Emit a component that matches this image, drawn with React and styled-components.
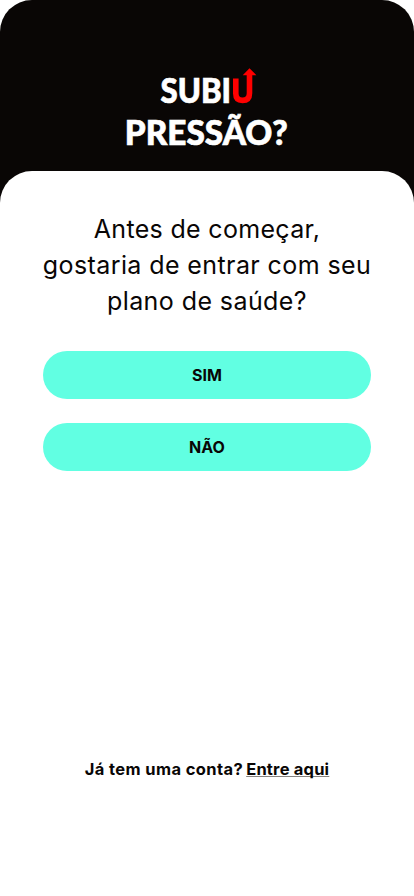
import React from "react";
import styled, { createGlobalStyle } from "styled-components";

const GlobalStyle = createGlobalStyle`
  * { box-sizing: border-box; }
  body { margin: 0; background: #fff; }
`;

const Screen = styled.div`
  width: 100%;
  height: 896px;
  display: flex;
  flex-direction: column;
  overflow: hidden;
  border-radius: 32px 32px 0 0;
  background: #090605;
  font-family: Inter, sans-serif;
  color: #090605;
`;

const Header = styled.header`
  flex: 0 0 171px;
  display: flex;
  justify-content: center;
  padding-top: 64px;
`;

const LogoSvg = styled.svg`
  display: block;
  width: 170px;
  height: 90px;
  font-family: Lato, sans-serif;
  font-weight: 900;
  font-size: 33.5px;
`;

const LogoText = styled.text`
  fill: #fff;
  stroke: #fff;
  stroke-width: 0.7px;
`;

const Sheet = styled.main`
  flex: 1;
  display: flex;
  flex-direction: column;
  padding: 40px 43px 0;
  border-radius: 32px 32px 0 0;
  background: #fff;
`;

const Question = styled.h1`
  margin: 0 -10px;
  font-size: 25px;
  line-height: 36px;
  font-weight: 400;
  text-align: center;
`;

const Line = styled.span`
  display: block;
  white-space: nowrap;
  letter-spacing: ${(p) => p.$spacing}px;
`;

const Choices = styled.div`
  display: flex;
  flex-direction: column;
  gap: 24px;
  margin-top: 31.5px;
  padding-top: 0.5px;
`;

const Choice = styled.button`
  height: 48px;
  padding: 0;
  border: 0;
  border-radius: 24px;
  background: #61ffe2;
  color: #090605;
  font: 700 16px/24px Inter, sans-serif;
`;

const Account = styled.p`
  display: flex;
  justify-content: center;
  gap: 3px;
  margin: auto 0 115px;
  font-size: 16.5px;
  line-height: 24px;
  font-weight: 700;
  white-space: nowrap;
`;

const Prompt = styled.span`
  letter-spacing: 0.4px;
`;

const Link = styled.a`
  color: inherit;
  letter-spacing: 0.2px;
  text-decoration: underline;
  text-decoration-color: #85827f;
  text-decoration-thickness: 1px;
  text-underline-offset: 1px;
  text-decoration-skip-ink: none;
`;

const Logo = () => (
  <LogoSvg viewBox="0 0 170 90" role="img" aria-label="Subiu pressão?">
    <LogoText x="38.5" y="38.6" textLength="70.5" lengthAdjust="spacingAndGlyphs">SUBI</LogoText>
    <path d="M113.8 14.6V29.5Q113.8 36.4 120.4 36.4Q127.5 36.4 127.5 29.2V10" fill="none" stroke="#f00" strokeWidth="5.6" />
    <path d="M120.7 11.2L127.5 4.2L134.4 11.2Z" fill="#f00" />
    <LogoText x="2.8" y="80.7" textLength="163" lengthAdjust="spacingAndGlyphs">PRESSÃO?</LogoText>
  </LogoSvg>
);

export default function App() {
  return (
    <>
      <GlobalStyle />
      <Screen>
        <Header><Logo /></Header>
        <Sheet>
          <Question>
            <Line $spacing={0.32}>Antes de começar,</Line>
            <Line $spacing={0.4}>gostaria de entrar com seu</Line>
            <Line $spacing={0.42}>plano de saúde?</Line>
          </Question>
          <Choices>
            <Choice>SIM</Choice>
            <Choice>NÃO</Choice>
          </Choices>
          <Account>
            <Prompt>Já tem uma conta?</Prompt>
            <Link>Entre aqui</Link>
          </Account>
        </Sheet>
      </Screen>
    </>
  );
}
